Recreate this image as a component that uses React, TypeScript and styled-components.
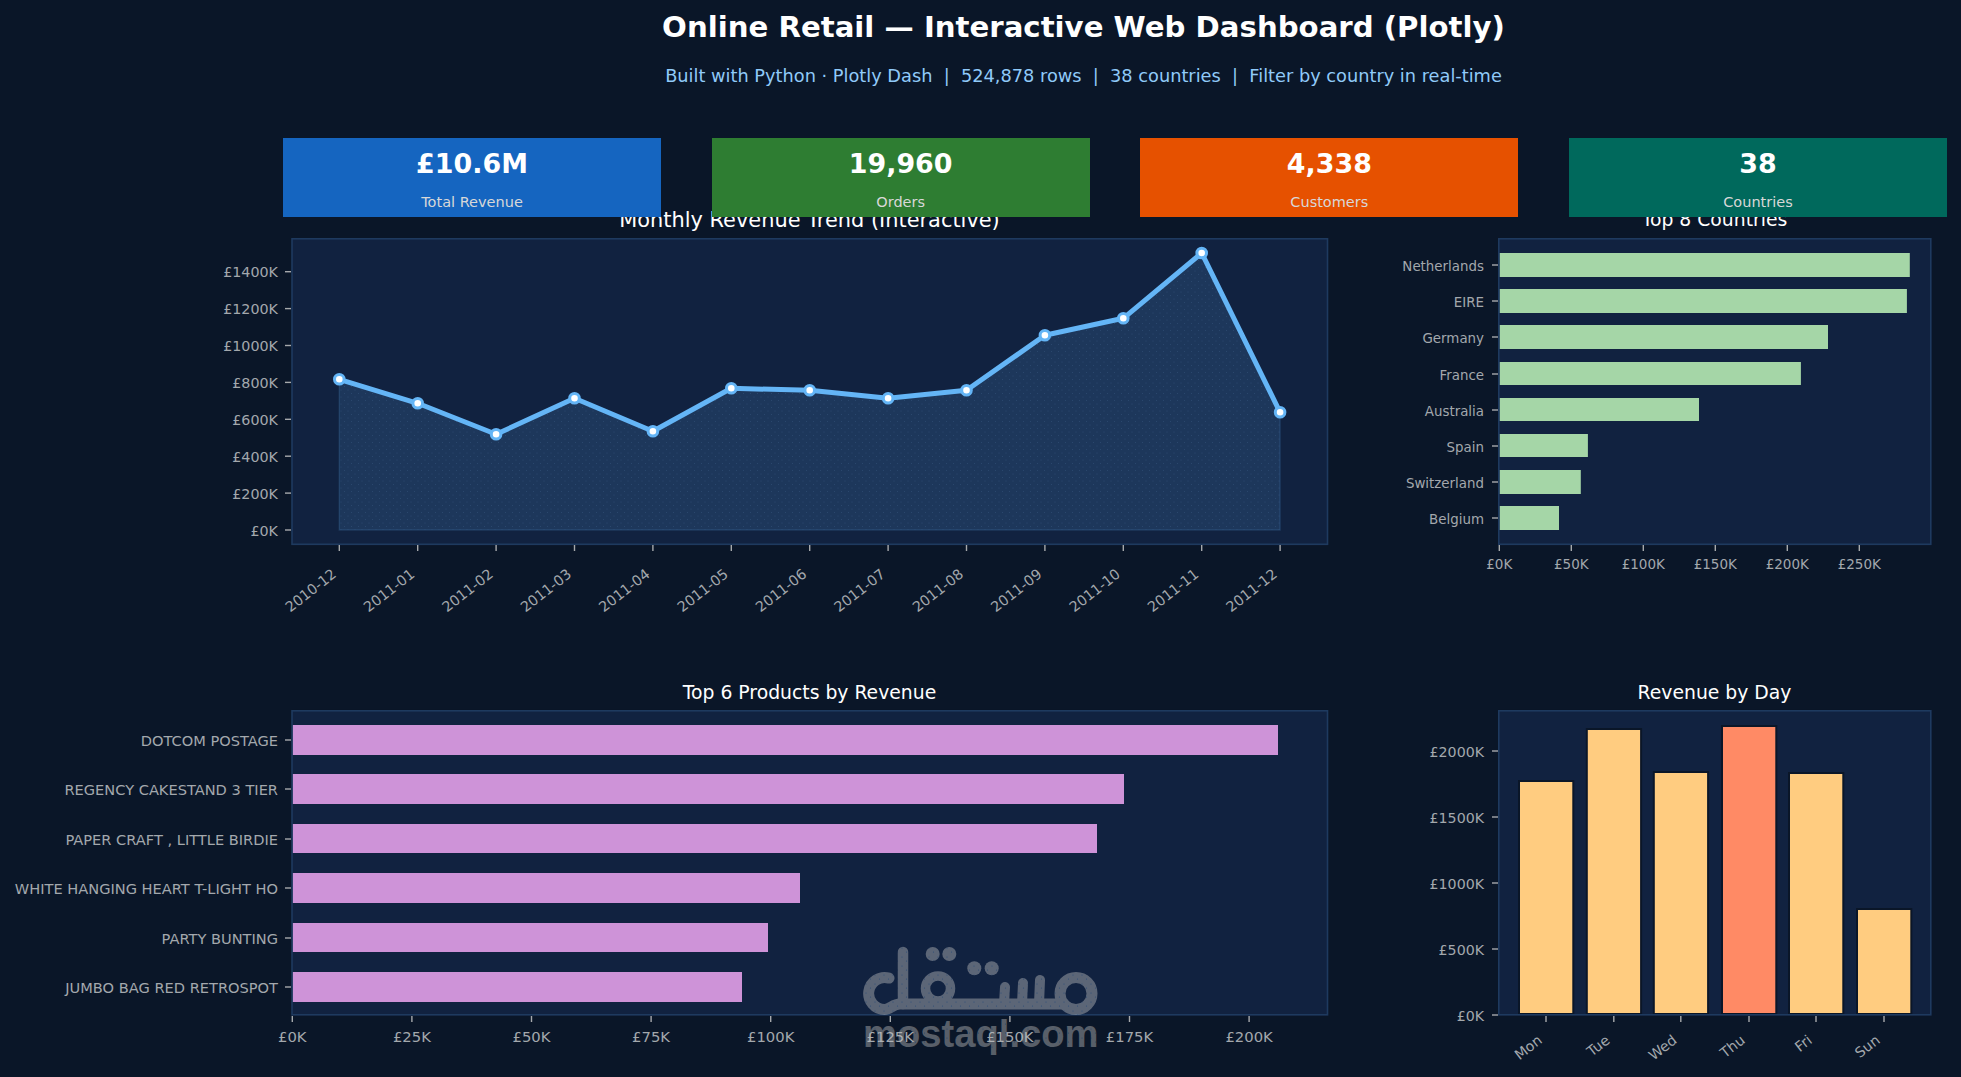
import React from "react";
import styled, { createGlobalStyle } from "styled-components";

const FONT = `"DejaVu Sans", "Liberation Sans", sans-serif`;

const GlobalStyle = createGlobalStyle`
  html, body { margin: 0; padding: 0; background: #0a1628; }
`;

const Page = styled.div`
  position: relative;
  width: 1961px;
  height: 1077px;
  overflow: hidden;
  background: #0a1628;
  font-family: ${FONT};
`;

const Header = styled.header`
  box-sizing: border-box;
  width: 1601px;
  margin-left: 283px;
  padding-top: 10px;
  text-align: center;
`;

const Title = styled.h1`
  margin: 0;
  font-size: 29.2px;
  line-height: 34px;
  font-weight: 700;
  color: #ffffff;
`;

const Subtitle = styled.p`
  margin: 22px 0 0;
  font-size: 17.75px;
  line-height: 20px;
  white-space: pre;
  color: #90caf9;
`;

const CardRow = styled.section`
  position: relative;
  z-index: 1;
  display: grid;
  grid-template-columns: repeat(4, 378px);
  column-gap: 50.67px;
  margin: 52px 0 0 283px;
`;

const Card = styled.div<{ $bg: string }>`
  height: 79px;
  padding-top: 11px;
  box-sizing: border-box;
  background: ${(p) => p.$bg};
  text-align: center;
`;

const CardValue = styled.div`
  font-size: 26.9px;
  line-height: 30px;
  font-weight: 700;
  color: #ffffff;
`;

const CardLabel = styled.div`
  margin-top: 14px;
  font-size: 14.5px;
  line-height: 18px;
  color: #d8d8d8;
`;

const ChartGrid = styled.section`
  display: grid;
  grid-template-columns: 1400px 561px;
  grid-template-rows: 473px 395px;
  margin-top: -8px;
`;

const Figure = styled.figure`
  margin: 0;
  min-width: 0;
`;

const ChartTitle = styled.figcaption<{ $left: number; $width: number; $size: number }>`
  width: ${(p) => p.$width}px;
  margin-left: ${(p) => p.$left}px;
  font-size: ${(p) => p.$size}px;
  line-height: 22px;
  text-align: center;
  color: #ffffff;
`;

const ChartSvg = styled.svg`
  display: block;
`;

const PanelRect = styled.rect`
  fill: #112240;
`;

const PanelBorder = styled.rect`
  fill: none;
  stroke: #1e3a5f;
  stroke-width: 1.6;
`;

const TickMark = styled.line`
  stroke: #a6a9ac;
  stroke-width: 1.4;
`;

const TickLabel = styled.text<{ $size: number }>`
  font-family: ${FONT};
  font-size: ${(p) => p.$size}px;
  fill: #a3a8ad;
`;

const Area = styled.polygon`
  fill: rgba(100, 181, 246, 0.15);
  stroke: rgba(100, 181, 246, 0.15);
  stroke-width: 1.5;
`;

const TrendLine = styled.polyline`
  fill: none;
  stroke: #64b5f6;
  stroke-width: 5;
  stroke-linejoin: round;
`;

const Marker = styled.circle`
  fill: #ffffff;
  stroke: #64b5f6;
  stroke-width: 3;
`;

const Bar = styled.rect<{ $fill: string; $edge?: boolean }>`
  fill: ${(p) => p.$fill};
  stroke: ${(p) => (p.$edge ? "#0a1628" : "none")};
  stroke-width: ${(p) => (p.$edge ? 2 : 0)};
`;

const WatermarkBox = styled.div`
  position: absolute;
  left: 855px;
  top: 940px;
  width: 250px;
  height: 120px;
  opacity: 0.43;
  pointer-events: none;
`;

const WatermarkText = styled.text`
  font-family: "Liberation Sans", Arial, sans-serif;
  font-weight: 700;
  font-size: 38.2px;
`;

const months = [
  "2010-12", "2011-01", "2011-02", "2011-03", "2011-04", "2011-05", "2011-06",
  "2011-07", "2011-08", "2011-09", "2011-10", "2011-11", "2011-12",
];
const monthlyY = [379.3, 403.3, 434.3, 398.3, 431.3, 388.3, 390.3, 398.3, 390.3, 335.3, 318.3, 253, 412.3];
const monthX = (i: number) => 339.3 + i * 78.4;
const trendTicks = ["£0K", "£200K", "£400K", "£600K", "£800K", "£1000K", "£1200K", "£1400K"];

const countries = [
  { name: "Netherlands", top: 253, h: 24, right: 1909.8 },
  { name: "EIRE", top: 289, h: 24, right: 1906.9 },
  { name: "Germany", top: 325, h: 24, right: 1828 },
  { name: "France", top: 362, h: 23, right: 1800.9 },
  { name: "Australia", top: 398, h: 23, right: 1699 },
  { name: "Spain", top: 434, h: 23, right: 1587.9 },
  { name: "Switzerland", top: 470, h: 24, right: 1580.8 },
  { name: "Belgium", top: 506, h: 24, right: 1559 },
];
const countryTicks = ["£0K", "£50K", "£100K", "£150K", "£200K", "£250K"];

const products = [
  { name: "DOTCOM POSTAGE", top: 725, h: 30, right: 1278 },
  { name: "REGENCY CAKESTAND 3 TIER", top: 774, h: 30, right: 1124 },
  { name: "PAPER CRAFT , LITTLE BIRDIE", top: 824, h: 29, right: 1097 },
  { name: "WHITE HANGING HEART T-LIGHT HO", top: 873, h: 30, right: 800 },
  { name: "PARTY BUNTING", top: 923, h: 29, right: 768 },
  { name: "JUMBO BAG RED RETROSPOT", top: 972, h: 30, right: 742 },
];
const productTicks = ["£0K", "£25K", "£50K", "£75K", "£100K", "£125K", "£150K", "£175K", "£200K"];

const days = [
  { name: "Mon", x: 1520, top: 782, fill: "#ffcc80" },
  { name: "Tue", x: 1587.8, top: 730, fill: "#ffcc80" },
  { name: "Wed", x: 1654.8, top: 773, fill: "#ffcc80" },
  { name: "Thu", x: 1723, top: 727, fill: "#ff8a65" },
  { name: "Fri", x: 1790, top: 774, fill: "#ffcc80" },
  { name: "Sun", x: 1858, top: 910, fill: "#ffcc80" },
];
const dayTicks = ["£0K", "£500K", "£1000K", "£1500K", "£2000K"];

const cards = [
  { value: "£10.6M", label: "Total Revenue", bg: "#1565c0" },
  { value: "19,960", label: "Orders", bg: "#2e7d32" },
  { value: "4,338", label: "Customers", bg: "#e65100" },
  { value: "38", label: "Countries", bg: "#00695c" },
];

function TrendChart() {
  const pts = monthlyY.map((y, i) => `${monthX(i)},${y}`).join(" ");
  const area = `${monthX(0)},530 ${pts} ${monthX(12)},530`;
  return (
    <ChartSvg width={1400} height={451} viewBox="0 231 1400 451">
      <defs>
        <pattern id="hatch" width="7" height="7" patternUnits="userSpaceOnUse">
          <circle cx="1.5" cy="1.5" r="0.5" fill="rgba(130,180,230,0.17)" />
          <circle cx="5" cy="5" r="0.5" fill="rgba(130,180,230,0.17)" />
        </pattern>
      </defs>
      <PanelRect x={292} y={238.8} width={1035.5} height={305.5} />
      <Area points={area} />
      <polygon points={area} fill="url(#hatch)" />
      <TrendLine points={pts} />
      {monthlyY.map((y, i) => (
        <Marker key={i} cx={monthX(i)} cy={y} r={4.8} />
      ))}
      <PanelBorder x={292} y={238.8} width={1035.5} height={305.5} />
      {trendTicks.map((t, i) => {
        const y = 530 - i * 36.9;
        return (
          <g key={t}>
            <TickMark x1={285} x2={291} y1={y} y2={y} />
            <TickLabel $size={14.3} x={278} y={y + 5.5} textAnchor="end">{t}</TickLabel>
          </g>
        );
      })}
      {months.map((m, i) => {
        const x = monthX(i);
        return (
          <g key={m}>
            <TickMark x1={x} x2={x} y1={545} y2={551} />
            <TickLabel $size={14.3} x={x - 2} y={576} textAnchor="end" transform={`rotate(-38 ${x - 2} 576)`}>{m}</TickLabel>
          </g>
        );
      })}
    </ChartSvg>
  );
}

function CountryChart() {
  return (
    <ChartSvg width={561} height={451} viewBox="1400 231 561 451">
      <PanelRect x={1498.8} y={238.8} width={432} height={305.5} />
      {countries.map((c) => (
        <g key={c.name}>
          <Bar $fill="#a5d6a7" x={1499.5} y={c.top} width={c.right - 1499.5} height={c.h} />
          <TickMark x1={1492} x2={1498} y1={c.top + 12} y2={c.top + 12} />
          <TickLabel $size={13.4} x={1484} y={c.top + 17.5} textAnchor="end">{c.name}</TickLabel>
        </g>
      ))}
      <PanelBorder x={1498.8} y={238.8} width={432} height={305.5} />
      {countryTicks.map((t, i) => {
        const x = 1499.3 + i * 72;
        return (
          <g key={t}>
            <TickMark x1={x} x2={x} y1={545} y2={551} />
            <TickLabel $size={13.5} x={x} y={569} textAnchor="middle">{t}</TickLabel>
          </g>
        );
      })}
    </ChartSvg>
  );
}

function ProductChart() {
  return (
    <ChartSvg width={1400} height={373} viewBox="0 704 1400 373">
      <PanelRect x={292} y={710.8} width={1035.5} height={304} />
      {products.map((p) => (
        <g key={p.name}>
          <Bar $fill="#ce93d8" x={292.5} y={p.top} width={p.right - 292.5} height={p.h} />
          <TickMark x1={285} x2={291} y1={p.top + 15} y2={p.top + 15} />
          <TickLabel $size={14.6} x={278} y={p.top + 20.5} textAnchor="end">{p.name}</TickLabel>
        </g>
      ))}
      <PanelBorder x={292} y={710.8} width={1035.5} height={304} />
      {productTicks.map((t, i) => {
        const x = 292.3 + i * 119.6;
        return (
          <g key={t}>
            <TickMark x1={x} x2={x} y1={1016} y2={1022} />
            <TickLabel $size={14.8} x={x} y={1042} textAnchor="middle">{t}</TickLabel>
          </g>
        );
      })}
    </ChartSvg>
  );
}

function DayChart() {
  return (
    <ChartSvg width={561} height={373} viewBox="1400 704 561 373">
      <PanelRect x={1498.8} y={710.8} width={432} height={304} />
      {days.map((d) => (
        <Bar key={d.name} $fill={d.fill} $edge x={d.x - 1} y={d.top - 1} width={54.3} height={1015 - d.top} />
      ))}
      <PanelBorder x={1498.8} y={710.8} width={432} height={304} />
      {dayTicks.map((t, i) => {
        const y = 1015 - i * 66;
        return (
          <g key={t}>
            <TickMark x1={1492} x2={1498} y1={y} y2={y} />
            <TickLabel $size={14.2} x={1484} y={y + 5.5} textAnchor="end">{t}</TickLabel>
          </g>
        );
      })}
      {days.map((d) => {
        const x = d.x + 26;
        return (
          <g key={d.name}>
            <TickMark x1={x} x2={x} y1={1016} y2={1022} />
            <TickLabel $size={14.2} x={x - 3} y={1042} textAnchor="end" transform={`rotate(-38 ${x - 3} 1042)`}>{d.name}</TickLabel>
          </g>
        );
      })}
    </ChartSvg>
  );
}

function Watermark() {
  const paint = "url(#speck)";
  const s = { fill: "none", stroke: paint, strokeLinecap: "round" as const };
  return (
    <WatermarkBox>
      <svg width={250} height={120} viewBox="855 940 250 120">
        <defs>
          <pattern id="speck" width="9" height="9" patternUnits="userSpaceOnUse">
            <rect width="9" height="9" fill="#c0c0c0" />
            <circle cx="2" cy="3" r="0.6" fill="#4f86bd" />
            <circle cx="6.5" cy="7" r="0.6" fill="#4f86bd" />
          </pattern>
        </defs>
        {/* hook at the left end, baseline and the meem ring */}
        <path {...s} strokeWidth={11} d="M889 978.1 A16 16 0 1 0 884.5 1009.5 C890 1009.5 893 1004 900 1004 L1064 1004" />
        <path {...s} strokeWidth={10.5} d="M903 952 L903 1004" />
        <circle {...s} strokeWidth={9.5} cx={938} cy={988.5} r={12.5} />
        <circle {...s} strokeWidth={11} cx={1076} cy={993.5} r={16} />
        <path {...s} strokeWidth={10} d="M1005 987 L1004 1004 M1023 983 L1022 1004 M1040 980 L1039 1004" />
        <circle fill={paint} cx={932.7} cy={954} r={7} />
        <circle fill={paint} cx={949.3} cy={954} r={7} />
        <circle fill={paint} cx={974.3} cy={968.3} r={7} />
        <circle fill={paint} cx={991.7} cy={968.3} r={7} />
        <WatermarkText x={863} y={1047} fill={paint}>mostaql.com</WatermarkText>
      </svg>
    </WatermarkBox>
  );
}

export default function App() {
  return (
    <Page>
      <GlobalStyle />
      <Header>
        <Title>Online Retail — Interactive Web Dashboard (Plotly)</Title>
        <Subtitle>Built with Python · Plotly Dash  |  524,878 rows  |  38 countries  |  Filter by country in real-time</Subtitle>
      </Header>
      <CardRow>
        {cards.map((c) => (
          <Card key={c.label} $bg={c.bg}>
            <CardValue>{c.value}</CardValue>
            <CardLabel>{c.label}</CardLabel>
          </Card>
        ))}
      </CardRow>
      <ChartGrid>
        <Figure>
          <ChartTitle $left={291} $width={1037} $size={20.9}>Monthly Revenue Trend (Interactive)</ChartTitle>
          <TrendChart />
        </Figure>
        <Figure>
          <ChartTitle $left={98} $width={433} $size={18.8}>Top 8 Countries</ChartTitle>
          <CountryChart />
        </Figure>
        <Figure>
          <ChartTitle $left={291} $width={1037} $size={18.8}>Top 6 Products by Revenue</ChartTitle>
          <ProductChart />
        </Figure>
        <Figure>
          <ChartTitle $left={98} $width={433} $size={18.8}>Revenue by Day</ChartTitle>
          <DayChart />
        </Figure>
      </ChartGrid>
      <Watermark />
    </Page>
  );
}
